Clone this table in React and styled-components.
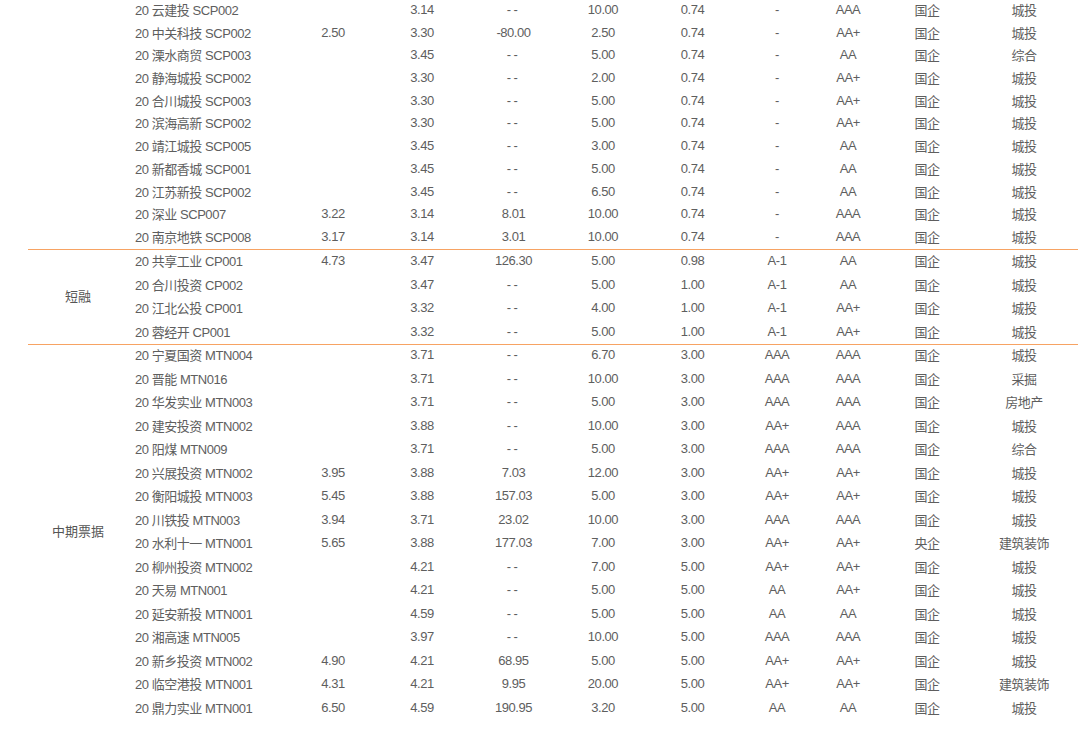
import React from "react";
import styled, { createGlobalStyle } from "styled-components";

const GlobalStyle = createGlobalStyle`
  html, body {
    margin: 0;
    padding: 0;
    background: #ffffff;
  }
  body {
    font-family: "Liberation Sans", Arial, "Noto Sans CJK SC", sans-serif;
    color: #5e5e5e;
  }
`;

const sections = [
  {
    label: "",
    height: 250,
    lift: 1,
    rows: [
      ["20 云建投 SCP002", "", "3.14", "--", "10.00", "0.74", "-", "AAA", "国企", "城投"],
      ["20 中关科技 SCP002", "2.50", "3.30", "-80.00", "2.50", "0.74", "-", "AA+", "国企", "城投"],
      ["20 溧水商贸 SCP003", "", "3.45", "--", "5.00", "0.74", "-", "AA", "国企", "综合"],
      ["20 静海城投 SCP002", "", "3.30", "--", "2.00", "0.74", "-", "AA+", "国企", "城投"],
      ["20 合川城投 SCP003", "", "3.30", "--", "5.00", "0.74", "-", "AA+", "国企", "城投"],
      ["20 滨海高新 SCP002", "", "3.30", "--", "5.00", "0.74", "-", "AA+", "国企", "城投"],
      ["20 靖江城投 SCP005", "", "3.45", "--", "3.00", "0.74", "-", "AA", "国企", "城投"],
      ["20 新都香城 SCP001", "", "3.45", "--", "5.00", "0.74", "-", "AA", "国企", "城投"],
      ["20 江苏新投 SCP002", "", "3.45", "--", "6.50", "0.74", "-", "AA", "国企", "城投"],
      ["20 深业 SCP007", "3.22", "3.14", "8.01", "10.00", "0.74", "-", "AAA", "国企", "城投"],
      ["20 南京地铁 SCP008", "3.17", "3.14", "3.01", "10.00", "0.74", "-", "AAA", "国企", "城投"],
    ],
  },
  {
    label: "短融",
    height: 94,
    lift: 1,
    rows: [
      ["20 共享工业 CP001", "4.73", "3.47", "126.30", "5.00", "0.98", "A-1", "AA", "国企", "城投"],
      ["20 合川投资 CP002", "", "3.47", "--", "5.00", "1.00", "A-1", "AA", "国企", "城投"],
      ["20 江北公投 CP001", "", "3.32", "--", "4.00", "1.00", "A-1", "AA+", "国企", "城投"],
      ["20 蓉经开 CP001", "", "3.32", "--", "5.00", "1.00", "A-1", "AA+", "国企", "城投"],
    ],
  },
  {
    label: "中期票据",
    height: 376,
    lift: 2,
    rows: [
      ["20 宁夏国资 MTN004", "", "3.71", "--", "6.70", "3.00", "AAA", "AAA", "国企", "城投"],
      ["20 晋能 MTN016", "", "3.71", "--", "10.00", "3.00", "AAA", "AAA", "国企", "采掘"],
      ["20 华发实业 MTN003", "", "3.71", "--", "5.00", "3.00", "AAA", "AAA", "国企", "房地产"],
      ["20 建安投资 MTN002", "", "3.88", "--", "10.00", "3.00", "AA+", "AAA", "国企", "城投"],
      ["20 阳煤 MTN009", "", "3.71", "--", "5.00", "3.00", "AAA", "AAA", "国企", "综合"],
      ["20 兴展投资 MTN002", "3.95", "3.88", "7.03", "12.00", "3.00", "AA+", "AA+", "国企", "城投"],
      ["20 衡阳城投 MTN003", "5.45", "3.88", "157.03", "5.00", "3.00", "AA+", "AA+", "国企", "城投"],
      ["20 川铁投 MTN003", "3.94", "3.71", "23.02", "10.00", "3.00", "AAA", "AAA", "国企", "城投"],
      ["20 水利十一 MTN001", "5.65", "3.88", "177.03", "7.00", "3.00", "AA+", "AA+", "央企", "建筑装饰"],
      ["20 柳州投资 MTN002", "", "4.21", "--", "7.00", "5.00", "AA+", "AA+", "国企", "城投"],
      ["20 天易 MTN001", "", "4.21", "--", "5.00", "5.00", "AA", "AA+", "国企", "城投"],
      ["20 延安新投 MTN001", "", "4.59", "--", "5.00", "5.00", "AA", "AA", "国企", "城投"],
      ["20 湘高速 MTN005", "", "3.97", "--", "10.00", "5.00", "AAA", "AAA", "国企", "城投"],
      ["20 新乡投资 MTN002", "4.90", "4.21", "68.95", "5.00", "5.00", "AA+", "AA+", "国企", "城投"],
      ["20 临空港投 MTN001", "4.31", "4.21", "9.95", "20.00", "5.00", "AA+", "AA+", "国企", "建筑装饰"],
      ["20 鼎力实业 MTN001", "6.50", "4.59", "190.95", "3.20", "5.00", "AA", "AA", "国企", "城投"],
    ],
  },
];

function App() {
  return (
    <>
      <GlobalStyle />
      <Table>
        {sections.map((section, si) => (
          <Section key={si} last={si === sections.length - 1}>
            <Category lift={section.lift}>{section.label}</Category>
            <Rows
              style={{
                gridTemplateRows: `repeat(${section.rows.length}, ${section.height / section.rows.length}px)`,
              }}
            >
              {section.rows.map((row, ri) => (
                <Row key={ri} lift={section.lift}>
                  <Name>{row[0]}</Name>
                  {row.slice(1).map((cell, ci) => (
                    <Cell key={ci} dashed={cell === "--"}>
                      {cell}
                    </Cell>
                  ))}
                </Row>
              ))}
            </Rows>
          </Section>
        ))}
      </Table>
    </>
  );
}

const Table = styled.div`
  width: 1050px;
  margin-left: 28px;
  margin-top: -1px;
  font-size: 13px;
`;

const Section = styled.div`
  display: flex;
  border-bottom: ${(p) => (p.last ? "none" : "1px solid #f7a363")};
`;

const Category = styled.div`
  width: 100px;
  flex: none;
  display: flex;
  align-items: center;
  justify-content: center;
  padding-bottom: ${(p) => p.lift * 2}px;
  font-family: "Noto Sans CJK SC", sans-serif;
  font-size: 13px;
  color: #555555;
`;

const Rows = styled.div`
  display: grid;
  flex: 1;
`;

const Row = styled.div`
  display: grid;
  grid-template-columns: 162px 86px 92px 91px 88px 91px 78px 64px 94px 100px;
  align-items: center;
  padding-bottom: ${(p) => p.lift * 2}px;
`;

const Name = styled.div`
  padding-left: 7px;
  white-space: nowrap;
  letter-spacing: -0.45px;
`;

const Cell = styled.div`
  text-align: center;
  white-space: nowrap;
  letter-spacing: ${(p) => (p.dashed ? "2.5px" : "-0.45px")};
`;

export default App;
